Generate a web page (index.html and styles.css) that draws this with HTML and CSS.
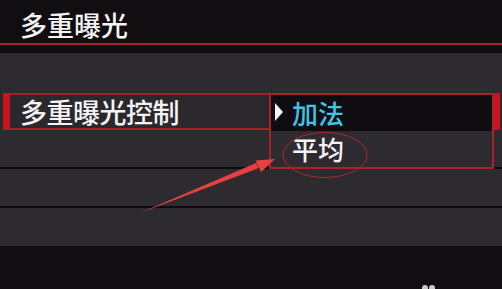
FILE: index.html
```html
<!DOCTYPE html>
<html lang="zh-CN">
<head>
  <meta charset="UTF-8" />
  <title>多重曝光</title>
  <link rel="stylesheet" href="styles.css">
</head>
<body>
  <div class="screen">
    <div class="header">
      <span class="title">多重曝光</span>
    </div>

    <!-- Menu rows -->
    <div class="menu">
      <div class="row"></div>
      <div class="row row-selected">
        <span class="label">多重曝光控制</span>
        <div class="popup">
          <div class="option option-active"><span class="cursor"></span>加法</div>
          <div class="option">平均</div>
        </div>
      </div>
      <div class="row row-line"></div>
      <div class="row row-line"></div>
      <div class="row"></div>
    </div>

    <!-- Annotation: arrow + circle -->
    <svg class="marks" width="502" height="289" viewBox="0 0 502 289">
      <ellipse cx="325" cy="155" rx="42" ry="22.5" fill="none" stroke="#b3262b" stroke-width="1"/>
      <polygon points="140,213 256,163 259,168" fill="#e8403f"/>
      <polygon points="275,159 255.5,160.5 261,172" fill="#e8403f"/>
      <circle cx="425" cy="288" r="3" fill="#c9c9c9"/>
      <circle cx="432" cy="288" r="3" fill="#c9c9c9"/>
    </svg>
  </div>
</body>
</html>
```

FILE: styles.css
```css
body {
  margin: 0;
  background: #100e11;
  font-family: "Noto Sans CJK SC", "Noto Sans", sans-serif;
}

.screen {
  position: relative;
  width: 502px;
  height: 289px;
  overflow: hidden;
  background: #100e11;
}

.header {
  height: 42px;
  border-bottom: 2px solid #a3242b;
  margin-bottom: 8px;
  display: flex;
  align-items: center;
  padding-left: 20px;
  padding-top: 1px;
  box-sizing: content-box;
}

.title {
  color: #f4f4f4;
  font-size: 27px;
  font-weight: 500;
  line-height: 1;
  padding-top: 4px;
}

.menu {
  background: #2d2b2f;
  height: 193px;
}

.row {
  height: 39px;
  box-sizing: border-box;
}

.row:first-child {
  height: 40px;
}

.row-line {
  border-bottom: 2px solid #0d0b0e;
}

.row-selected {
  position: relative;
  height: 37px;
  margin-left: 3px;
  margin-right: 2px;
  border: 2px solid #a3222a;
  border-left: 7px solid #c8141d;
  border-right: 8px solid #c8141d;
  background: #2a282c;
  display: flex;
  align-items: center;
  padding-left: 10px;
}

.label {
  color: #f4f4f4;
  font-size: 27px;
  font-weight: 500;
  line-height: 1;
  letter-spacing: -0.5px;
}

.popup {
  position: absolute;
  left: 259px;
  top: -2px;
  width: 225px;
  height: 76px;
  box-sizing: border-box;
  border: 2px solid #aa2229;
  background: #2d2b2f;
  z-index: 2;
}

.option {
  height: 36px;
  display: flex;
  align-items: center;
  padding-left: 21px;
  color: #f4f4f4;
  font-size: 26px;
  font-weight: 500;
  line-height: 1;
  position: relative;
}

.option-active {
  background: #0f0d11;
  color: #41c3e3;
}

.cursor {
  position: absolute;
  left: 4px;
  top: 8px;
  width: 0;
  height: 0;
  border-top: 9px solid transparent;
  border-bottom: 9px solid transparent;
  border-left: 8px solid #f4f4f4;
}

.marks {
  position: absolute;
  left: 0;
  top: 0;
  z-index: 3;
}
```
